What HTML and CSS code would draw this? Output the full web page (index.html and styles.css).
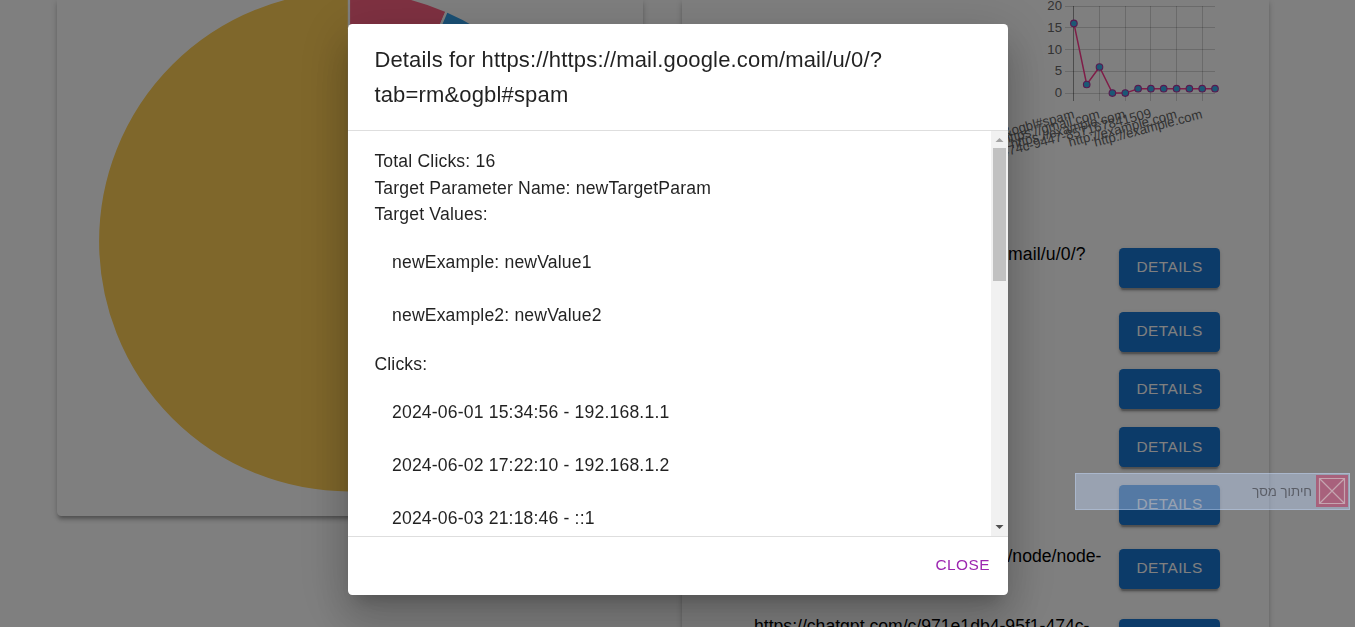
FILE: index.html
```html
<!DOCTYPE html>
<html lang="en">
<head>
<meta charset="utf-8">
<title>Click details</title>
<link rel="stylesheet" href="styles.css">
</head>
<body>
<main class="page">
  <section class="card card-pie">
    <svg class="pie" viewBox="0 0 586 516" width="586" height="516">
      <g stroke="#fff" stroke-width="2.2" stroke-linejoin="round">
        <path fill="#ffce56" d="M292 241.500V492.500A251 251 0 0 1 292 -9.500Z"/>
        <path fill="#ff6384" d="M292 241.500V-9.500A251 251 0 0 1 389.700 11.300Z"/>
        <path fill="#36a2eb" d="M292 241.500L389.700 11.300A251 251 0 0 1 478 75Z"/>
      </g>
    </svg>
  </section>
  <section class="card card-links">
    <svg class="chart" viewBox="682 0 587 224" width="587" height="224">
      <path class="grid" d="M1065 6.5H1215M1065 27.5H1215M1065 49.5H1215M1065 71.5H1215M1065 93.5H1215M1099.5 6V101M1125.5 6V101M1150.5 6V101M1176.5 6V101M1202.5 6V101"/>
      <path class="grid axis" d="M1073.5 6V101"/>
      <g class="tick" text-anchor="end">
        <text x="1062" y="10">20</text>
        <text x="1062" y="32">15</text>
        <text x="1062" y="53.500">10</text>
        <text x="1062" y="75">5</text>
        <text x="1062" y="97">0</text>
      </g>
      <g class="tick" text-anchor="end">
        <text transform="translate(1075 118) rotate(-15)">tab=rm&amp;ogbl#spam</text>
        <text transform="translate(1100.500 118) rotate(-15)">https://gmail.com</text>
        <text transform="translate(1126 118) rotate(-15)">https://example.com</text>
        <text transform="translate(1152 117) rotate(-15)">95f1-474c-9447-857167841509</text>
        <text transform="translate(1177.500 118) rotate(-15)">http://example.com</text>
        <text transform="translate(1203 118) rotate(-15)">http://example.com</text>
      </g>
      <path class="line" d="M1073.9 23.400L1086.700 84.500L1099.500 67L1112.400 93.100H1125.300L1138.100 88.700H1215"/>
      <g class="dots">
        <circle cx="1073.900" cy="23.400" r="3.300"/><circle cx="1086.700" cy="84.500" r="3.300"/><circle cx="1099.500" cy="67" r="3.300"/><circle cx="1112.400" cy="93.100" r="3.300"/><circle cx="1125.300" cy="93.100" r="3.300"/><circle cx="1138.100" cy="88.700" r="3.300"/><circle cx="1150.900" cy="88.700" r="3.300"/><circle cx="1163.700" cy="88.700" r="3.300"/><circle cx="1176.600" cy="88.700" r="3.300"/><circle cx="1189.400" cy="88.700" r="3.300"/><circle cx="1202.200" cy="88.700" r="3.300"/><circle cx="1215" cy="88.700" r="3.300"/>
      </g>
    </svg>
    <ul class="links">
      <li class="link link-first"><span class="link-text">https://https://mail.google.com/mail/u/0/?<br>tab=rm&amp;ogbl#spam</span><button class="btn">DETAILS</button></li>
      <li class="link"><span class="link-text">https://gmail.com</span><button class="btn">DETAILS</button></li>
      <li class="link"><span class="link-text">https://example.com</span><button class="btn">DETAILS</button></li>
      <li class="link"><span class="link-text">http://example.com</span><button class="btn">DETAILS</button></li>
      <li class="link"><span class="link-text">http://example.com</span><button class="btn">DETAILS</button></li>
      <li class="link link-node"><span class="link-text">https://www.example.com/node/node-<br>example</span><button class="btn">DETAILS</button></li>
      <li class="link"><span class="link-text">https://chatgpt.com/c/971e1db4-95f1-474c-<br>9447-857167841509</span><button class="btn">DETAILS</button></li>
    </ul>
  </section>
</main>

<div class="backdrop">
  <div class="dialog" role="dialog">
    <h2 class="dialog-title">Details for https://https://mail.google.com/mail/u/0/?<wbr>tab=rm&amp;ogbl#spam</h2>
    <div class="dialog-body">
      <div class="dialog-content">
        <p>Total Clicks: 16</p>
        <p>Target Parameter Name: newTargetParam</p>
        <p>Target Values:</p>
        <ul class="entries">
          <li>newExample: newValue1</li>
          <li>newExample2: newValue2</li>
        </ul>
        <p>Clicks:</p>
        <ul class="entries">
          <li>2024-06-01 15:34:56 - 192.168.1.1</li>
          <li>2024-06-02 17:22:10 - 192.168.1.2</li>
          <li>2024-06-03 21:18:46 - ::1</li>
        </ul>
      </div>
      <div class="scrollbar">
        <svg width="17" height="17" viewBox="0 0 17 17"><path fill="#a3a3a3" d="M4.500 11L8.500 7L12.500 11Z"/></svg>
        <div class="thumb"></div>
        <svg class="scroll-down" width="17" height="17" viewBox="0 0 17 17"><path fill="#505050" d="M4.500 6H12.500L8.500 10Z"/></svg>
      </div>
    </div>
    <div class="dialog-actions"><button class="btn-close">CLOSE</button></div>
  </div>
</div>

<div class="snip" dir="rtl" lang="he">
  <svg class="snip-icon" width="32" height="32" viewBox="0 0 32 32">
    <rect width="32" height="32" fill="#a8617c"/>
    <path d="M3.500 3.500H28.500V28.500H3.500ZM3.500 3.500L28.500 28.500M28.500 3.500L3.500 28.500" fill="none" stroke="#c4a5b0" stroke-width="1.200"/>
  </svg>
  <span>חיתוך מסך</span>
</div>
</body>
</html>
```

FILE: styles.css
```css
* { box-sizing: border-box; }

body {
  margin: 0;
  height: 627px;
  overflow: hidden;
  background: #fff;
  color: #000;
  font: 17.6px/26.4px "Liberation Sans", Arial, sans-serif;
}

ul, p, h2 { margin: 0; padding: 0; list-style: none; font-weight: 400; }
svg { display: block; }
button { font-family: inherit; border: 0; }

.page {
  display: flex;
  align-items: flex-start;
  gap: 39px;
  height: 627px;
  padding-left: 57px;
  overflow: hidden;
}

.card {
  flex: none;
  background: #fff;
  border-radius: 0 0 4.4px 4.4px;
  box-shadow: 0 3.3px 3.3px -2.2px rgba(0,0,0,.2), 0 3.3px 4.4px rgba(0,0,0,.14), 0 1.1px 8.8px rgba(0,0,0,.12);
}
.card-pie { width: 586px; height: 516px; }
.card-links { width: 587px; height: 720px; }

.grid { stroke: rgba(0,0,0,.17); fill: none; }
.axis { stroke: rgba(0,0,0,.4); }
.tick { font-size: 13.2px; fill: #666; }
.line { fill: none; stroke: #ff3a90; stroke-width: 1.5; }
.dots { fill: #36b0eb; stroke: #b0329e; stroke-width: 1.1; }

.links { padding: 8.4px 49px 0 72px; }
.link {
  display: flex;
  align-items: center;
  justify-content: space-between;
  gap: 17.6px;
  padding: 8.8px 0;
}
.link-text { white-space: nowrap; }
.link-first .link-text { padding-left: 10px; letter-spacing: .00938em; }
.link-node .link-text { margin-left: auto; }

.btn {
  flex: none;
  width: 101px;
  height: 40.15px;
  padding: 0 0 2.2px;
  border-radius: 4.4px;
  background: #1976d2;
  color: #fff;
  font-size: 15.4px;
  line-height: 27px;
  letter-spacing: .03em;
  box-shadow: 0 3.3px 1.1px -2.2px rgba(0,0,0,.2), 0 2.2px 2.2px rgba(0,0,0,.14), 0 1.1px 5.5px rgba(0,0,0,.12);
}

.backdrop {
  position: fixed;
  inset: 0;
  display: flex;
  justify-content: center;
  align-items: flex-start;
  padding: 24px 0 0 1px;
  background: rgba(0,0,0,.5);
}
.dialog {
  display: flex;
  flex-direction: column;
  width: 660px;
  height: 571px;
  overflow: hidden;
  border-radius: 4.4px;
  background: #fff;
  color: rgba(0,0,0,.87);
  box-shadow: 0 12.1px 16.5px -7.7px rgba(0,0,0,.2), 0 26.4px 41.8px 3.3px rgba(0,0,0,.14), 0 9.9px 50.6px 8.8px rgba(0,0,0,.12);
}
.dialog-title {
  padding: 17.6px 26.4px;
  font-size: 22px;
  line-height: 35.2px;
  letter-spacing: .0075em;
}
.dialog-body {
  display: flex;
  flex: 1;
  min-height: 0;
  border-block: 1px solid #dedede;
}
.dialog-content {
  flex: 1;
  overflow: hidden;
  padding: 17.6px 26.4px;
  letter-spacing: .00938em;
}
.entries { padding: 8.8px 0; }
.entries li { padding: 13.2px 17.6px; }

.scrollbar { display: flex; flex-direction: column; width: 17px; background: #f1f1f1; }
.thumb { width: 13px; height: 133px; margin: 0 2px; background: #c1c1c1; }
.scroll-down { margin-top: auto; }

.dialog-actions { display: flex; justify-content: flex-end; padding: 8.8px; }
.btn-close {
  width: 73px;
  height: 40.15px;
  padding: 0 0 2px;
  background: none;
  color: #9c27b0;
  font-size: 15.4px;
  letter-spacing: .03em;
}

/* Translucent capture label floating over the page */
.snip {
  position: fixed;
  left: 1075px;
  top: 472.5px;
  display: flex;
  align-items: center;
  gap: 4px;
  width: 275px;
  height: 37px;
  padding-right: 1px;
  border: 1.5px solid rgba(200,220,255,.35);
  background: rgba(193,215,253,.4);
  color: #5a5d66;
  font: 13.2px "Liberation Sans", sans-serif;
}
```
